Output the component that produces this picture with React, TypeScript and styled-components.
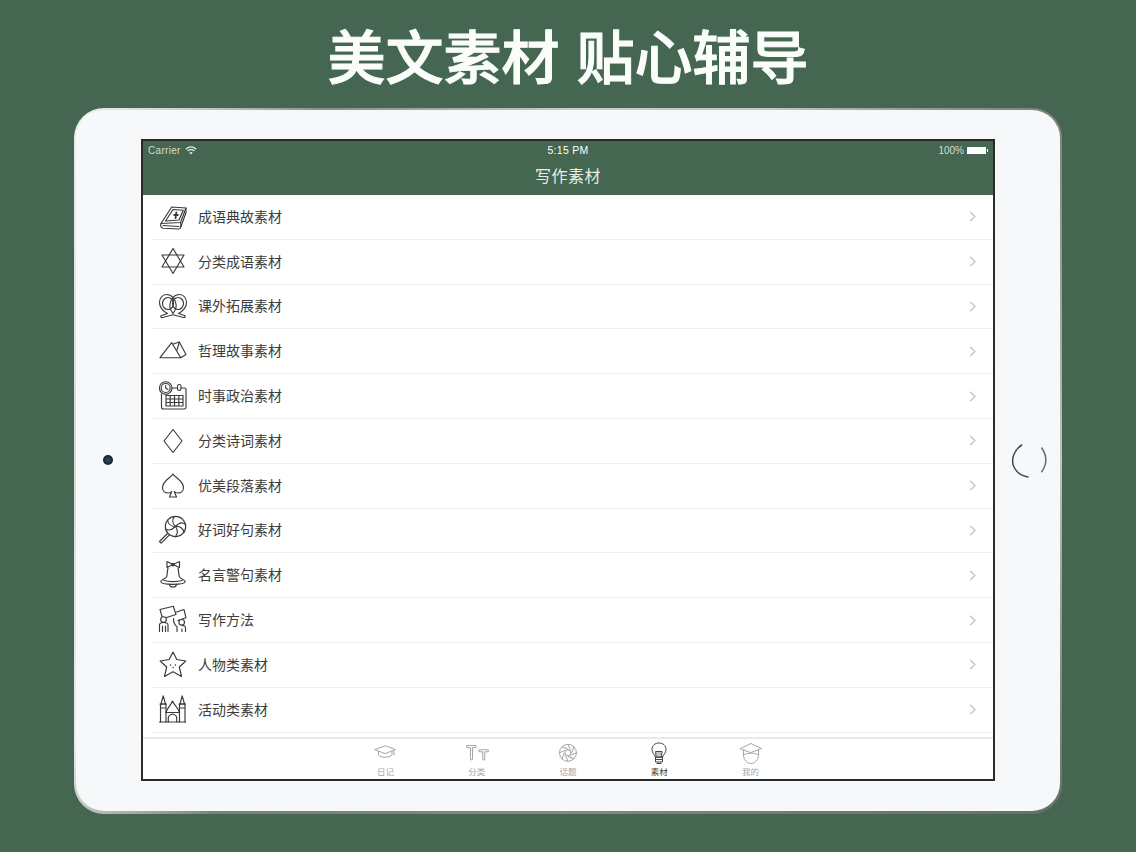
import * as React from 'react';
import styled, { createGlobalStyle } from 'styled-components';

const GlobalStyle = createGlobalStyle`
    html, body {
        margin: 0;
        padding: 0;
        background-color: #456650;
    }
`;

const Page = styled.div`
    width: 1136px;
    height: 852px;
    overflow: hidden;
    display: flex;
    flex-direction: column;
    align-items: center;
    background-color: #456650;
    font-family: 'Noto Sans CJK SC', 'Noto Sans', sans-serif;
`;

const Headline = styled.h1`
    height: 108px;
    margin: 0;
    padding-bottom: 1px;
    box-sizing: border-box;
    display: flex;
    align-items: center;
    font-size: 58px;
    font-weight: 500;
    -webkit-text-stroke: 1px #fbfdfb;
    word-spacing: 4px;
    color: #fbfdfb;
    white-space: pre;
`;

const DeviceEdge = styled.div`
    position: relative;
    width: 988px;
    height: 706px;
    box-sizing: border-box;
    padding: 2px 2px 3px 2px;
    border-radius: 30px;
    background: conic-gradient(
        #c8ccca 0deg,
        #c2c6c4 30deg,
        #7c827e 54deg,
        #bfc4c1 90deg,
        #6a706c 126deg,
        #858a87 180deg,
        #7a807c 225deg,
        #e8ecea 240deg,
        #d5d9d6 270deg,
        #eceeed 306deg,
        #8a908c 325deg,
        #c8ccca 360deg
    );
`;

const DeviceBody = styled.div`
    height: 100%;
    border-radius: 28px;
    background-color: #f7f8fa;
    display: flex;
    justify-content: center;
    padding-top: 29px;
    box-sizing: border-box;
`;

const Camera = styled.div`
    position: absolute;
    left: 29px;
    top: 347px;
    width: 10px;
    height: 10px;
    border-radius: 50%;
    background: radial-gradient(circle, #24506a 0%, #15222b 70%);
`;

const HomeButton = styled.svg`
    position: absolute;
    left: 937px;
    top: 334px;
`;

const Screen = styled.div`
    width: 854px;
    height: 642px;
    box-sizing: border-box;
    border: 2px solid #2a2a2a;
    display: flex;
    flex-direction: column;
    background-color: #ffffff;
`;

const Header = styled.header`
    height: 54px;
    flex-shrink: 0;
    background-color: #456650;
    color: #e6eee8;
`;

const StatusBar = styled.div`
    height: 18px;
    padding: 0 5px 0 5px;
    display: grid;
    grid-template-columns: 1fr auto 1fr;
    align-items: center;
    font-family: 'Liberation Sans', sans-serif;
    font-size: 10px;
`;

const StatusLeft = styled.div`
    display: flex;
    align-items: center;
    gap: 4px;
    color: #d4ded7;
    letter-spacing: 0.3px;
`;

const StatusTime = styled.div`
    font-size: 10.5px;
    color: #ffffff;
    letter-spacing: 0.3px;
`;

const StatusRight = styled.div`
    display: flex;
    align-items: center;
    justify-content: flex-end;
    gap: 3px;
    color: #d4ded7;
`;

const Battery = styled.div`
    position: relative;
    width: 19px;
    height: 7px;
    margin-right: 2px;
    background-color: #ffffff;

    &::after {
        content: '';
        position: absolute;
        right: -2px;
        top: 2px;
        width: 1px;
        height: 3px;
        background-color: #ffffff;
    }
`;

const NavTitle = styled.div`
    height: 36px;
    display: flex;
    align-items: center;
    justify-content: center;
    padding-bottom: 4px;
    box-sizing: border-box;
    font-size: 16px;
    letter-spacing: 0.5px;
`;

const List = styled.div`
    flex: 1;
    overflow: hidden;
`;

const Row = styled.div`
    height: 44.8px;
    box-sizing: border-box;
    margin-left: 9px;
    padding: 0 16px 2px 6px;
    display: flex;
    align-items: center;
    gap: 10px;
    border-bottom: 1px solid #efefef;
`;

const RowIcon = styled.svg`
    width: 30px;
    height: 30px;
    margin-top: 2px;
    flex-shrink: 0;
    fill: none;
    stroke: #3a3a3a;
    stroke-width: 1.15;
    stroke-linejoin: round;
    stroke-linecap: round;
`;

const RowLabel = styled.span`
    flex: 1;
    font-size: 14px;
    color: #3c3c3c;
`;

const Chevron = styled.svg`
    width: 7px;
    height: 11px;
    margin: 2px 1px 0 0;
    fill: none;
    stroke: #c4c4c8;
    stroke-width: 1.3;
`;

const TabBar = styled.nav`
    height: 42px;
    flex-shrink: 0;
    box-sizing: border-box;
    border-top: 2px solid #e9e9e9;
    display: flex;
    justify-content: center;
`;

const Tab = styled.div<{ $active?: boolean }>`
    width: 91.3px;
    display: flex;
    flex-direction: column;
    align-items: center;
    padding-top: 1px;
    color: ${(p) => (p.$active ? '#444444' : '#a6a6a6')};
`;

const TabIcon = styled.svg`
    width: 26px;
    height: 26px;
    fill: none;
    stroke: currentColor;
    stroke-width: 1;
    stroke-linejoin: round;
    stroke-linecap: round;
`;

const TabLabel = styled.span`
    font-size: 8.5px;
    line-height: 11px;
`;

const rowIcons: React.ReactNode[] = [
    <>
        <path d="M3 21.500 13.700 5 28 6 22.500 20.500Z" />
        <path d="M7.500 19 15 7.500 25.300 8.300 21 18Z" />
        <path d="M3 21.500C2 24 3 26 5.500 26.200L20.500 27C22 27 22.800 25.800 23 24.500L28 10.500V6" />
        <path d="M22.500 20.500 23 24.500M5 23.500 21 24.500" />
        <path d="M16.200 13h3.600M18.300 10.500 17.600 16" strokeWidth="1.800" />
    </>,
    <>
        <path d="M15 1.500 26 20H4Z" />
        <path d="M15 26.500 4 8H26Z" />
    </>,
    <>
        <path d="M15 6.500C13 4 10.500 3.500 8.500 3.500C4 3.500 1.500 7.500 1.500 11.500C1.500 16.500 5 20 9.500 22.500L3.500 24.500C2 25.500 3 26.800 4.500 26.500L15 23.800L25.500 26.500C27 26.800 28 25.500 26.500 24.500L20.500 22.500C25 20 28.500 16.500 28.500 11.500C28.500 7.500 26 3.500 21.500 3.500C19.500 3.500 17 4 15 6.500Z" />
        <ellipse cx="10" cy="12.500" rx="5.500" ry="6" />
        <ellipse cx="20" cy="12.500" rx="5.500" ry="6" />
        <path d="M15 6.500C17.500 9.500 18.500 13 18 16.500C17.500 19 16 21 15 22.500C14 21 12.500 19 12 16.500C11.500 13 12.500 9.500 15 6.500Z" />
    </>,
    <>
        <path d="M2 21.700 13.700 6.700 22.700 21.700Z" />
        <path d="M15.300 8 21.300 6 28 18.400 22.700 21.700" />
        <path d="M21.300 6 19 14" />
    </>,
    <>
        <path d="M3.500 13V26C3.500 27.200 4.500 28 5.500 28H26.500C27.500 28 28 27.200 28 26V8.500C28 7.500 27.500 7 26.500 7H23.500M18.500 7H14" />
        <circle cx="7.700" cy="7" r="6.300" fill="#ffffff" />
        <circle cx="7.700" cy="7" r="4.500" />
        <path d="M7.700 4.500V7.300L10 8.500" />
        <rect x="19.500" y="3.500" width="3.500" height="6" rx="1.700" />
        <path d="M8 14.500H25V25H8ZM8 18H25M8 21.500H25M12.200 14.500V25M16.500 14.500V25M20.800 14.500V25" />
    </>,
    <path d="M15 3.500 24 15 15 26.500 6 15Z" />,
    <path d="M15 3C13 6.500 4.500 10 4.500 16.500C4.500 20 7 22 10 22C11.500 22 13 21.500 13.700 20.500L11.500 26H18.500L16.300 20.500C17 21.500 18.500 22 20 22C23 22 25.500 20 25.500 16.500C25.500 10 17 6.500 15 3Z" />,
    <>
        <circle cx="17.500" cy="11.500" r="10.200" />
        <path d="M17.500 11.500C14 8 14 4 16.500 1.500M17.500 11.500C21 7.500 24.500 7 27.500 9.500M17.500 11.500C22.500 11 25.500 14 26 17.500M17.500 11.500C20 15 19.500 19 17.500 21.700M17.500 11.500C14 15 10.500 15.500 8 14.500M17.500 11.500C13 11.500 10 8.500 9.500 5" />
        <path d="M9.500 18.500 1.500 26.500 3.200 28.200 11.200 20.200" />
    </>,
    <>
        <path d="M15 4.500 9 1.500V7.600ZM15 4.500 21.500 1.500V7.600Z" />
        <circle cx="15" cy="4.500" r="1.300" />
        <path d="M10 8C9 12 9.500 15 8.500 17C7 19.500 3 19.500 2.800 21.500C2.800 23 5 24.300 15 24.300C25 24.300 27.200 23 27.200 21.500C27 19.500 23 19.500 21.500 17C20.500 15 21 12 20 8" />
        <path d="M6 20.500C10 22 20 22 24 20.500" />
        <path d="M11.500 24.300C12 28 18 28 18.500 24.300" />
    </>,
    <>
        <path d="M2 4.500 15.300 1.200 18 9.500 4.700 13.800Z" />
        <path d="M18.600 7 26 4.500 28 12.800 19.800 15.500" />
        <circle cx="5.500" cy="14.500" r="2.800" fill="#ffffff" />
        <circle cx="23.700" cy="17.300" r="2.800" fill="#ffffff" />
        <path d="M1.500 26.500V20C1.500 18 3.500 17.500 5.500 17.500C7.500 17.500 10 18 10 20V26.500M4.500 21V26.500M7.500 21V26.500" />
        <path d="M15.500 13.500C15.500 18 17 20.500 19 21.500V26.500M27.500 26.500V23C27.500 21.200 26 20.500 24 20.500M24 24V26.500" />
    </>,
    <>
        <path d="M15 2 18.800 9.500 27.800 11 21.300 17 23.500 26.500 15 21.800 6.500 26.500 8.700 17 2.200 11 11.200 9.500Z" />
        <path d="M12.500 15H12.700M17.300 15H17.500M15 17.500H15.200" strokeWidth="1.300" />
    </>,
    <>
        <path d="M1.500 27H27.500" />
        <path d="M2.500 27V9H8V27M21.500 27V9H27V27" />
        <path d="M2 9H8.500M21 9H27.500" />
        <path d="M3 9 5.200 .8 7.500 9M22 9 24.200 .8 26.500 9" />
        <path d="M8 17.500H21.500" />
        <path d="M8 17.500C9.500 12.500 12.500 11 14.500 6C16.500 11 20 12.500 21.500 17.500" />
        <path d="M10.300 27V23C10.300 20.800 12.500 19.500 14.500 19C16.500 19.500 18.700 20.800 18.700 23V27" />
        <path d="M3 13H7.500M22 13H26.500" />
    </>,
];

const rows = [
    '成语典故素材',
    '分类成语素材',
    '课外拓展素材',
    '哲理故事素材',
    '时事政治素材',
    '分类诗词素材',
    '优美段落素材',
    '好词好句素材',
    '名言警句素材',
    '写作方法',
    '人物类素材',
    '活动类素材',
];

const apertureBlades = [0, 45, 90, 135, 180, 225, 270, 315];

const tabs: { label: string; active?: boolean; icon: React.ReactNode }[] = [
    {
        label: '日记',
        icon: (
            <>
                <path d="M3 9.500 13.500 5.800 23.500 9.500 13.500 13.500Z" />
                <path d="M6.500 11.500V15C9 18 17 18 20 15V11.500" />
                <path d="M22 10.500V15" />
            </>
        ),
    },
    {
        label: '分类',
        icon: (
            <>
                <path d="M3 5.500H12V7.500H8.500V19.800H6.500V7.500H3Z" />
                <path d="M15.300 9.800H24.300V11.800H20.800V19.800H18.800V11.800H15.300Z" />
            </>
        ),
    },
    {
        label: '话题',
        icon: (
            <>
                <circle cx="13" cy="12.800" r="8.500" />
                <circle cx="13" cy="12.800" r="3" />
                {apertureBlades.map((deg) => (
                    <path key={deg} d="M13 4.300 15.500 10" transform={`rotate(${deg} 13 12.800)`} />
                ))}
            </>
        ),
    },
    {
        label: '素材',
        active: true,
        icon: (
            <>
                <path d="M9.500 17C8.500 14.500 6 13 6 9.500C6 5.500 9 3 13 3C17 3 20 5.500 20 9.500C20 13 17.500 14.500 16.500 17Z" />
                <path d="M10 11.500H16L15.500 17H10.500Z" fill="#c4c4c4" />
                <path d="M9.500 17V22H16.500V17M9.500 19.500H16.500" />
                <path d="M11 23.500H15" />
            </>
        ),
    },
    {
        label: '我的',
        icon: (
            <>
                <path d="M2.500 8.500 13 3.500 23.500 8.500 13 12.500Z" />
                <path d="M5.500 10V15C5.500 19.500 9 23.500 13 23.500C17 23.500 20.500 19.500 20.500 15V10" />
                <path d="M5.500 15C9 12.500 17 12.500 20.500 15" />
            </>
        ),
    },
];

function App() {
    return (
        <Page>
            <GlobalStyle />
            <Headline>美文素材 贴心辅导</Headline>
            <DeviceEdge>
                <DeviceBody>
                    <Screen>
                        <Header>
                            <StatusBar>
                                <StatusLeft>
                                    Carrier
                                    <svg width="12" height="9" viewBox="0 0 12 9" fill="none" stroke="#e6eee8" strokeWidth="1.300">
                                        <path d="M.8 3.200C4 .4 8 .4 11.200 3.200M2.600 5C4.800 3.300 7.200 3.300 9.400 5" />
                                        <path d="M4.300 6.500C5.500 5.700 6.500 5.700 7.700 6.500L6 8.400Z" fill="#e6eee8" stroke="none" />
                                    </svg>
                                </StatusLeft>
                                <StatusTime>5:15 PM</StatusTime>
                                <StatusRight>
                                    100%
                                    <Battery />
                                </StatusRight>
                            </StatusBar>
                            <NavTitle>写作素材</NavTitle>
                        </Header>
                        <List>
                            {rows.map((label, i) => (
                                <Row key={label}>
                                    <RowIcon viewBox="0 0 30 30">{rowIcons[i]}</RowIcon>
                                    <RowLabel>{label}</RowLabel>
                                    <Chevron viewBox="0 0 7 11">
                                        <path d="M1 .8 6 5.500 1 10.200" />
                                    </Chevron>
                                </Row>
                            ))}
                        </List>
                        <TabBar>
                            {tabs.map((tab) => (
                                <Tab key={tab.label} $active={tab.active}>
                                    <TabIcon viewBox="0 0 26 26">{tab.icon}</TabIcon>
                                    <TabLabel>{tab.label}</TabLabel>
                                </Tab>
                            ))}
                        </TabBar>
                    </Screen>
                </DeviceBody>
                <Camera />
                <HomeButton width="38" height="38" viewBox="0 0 38 38" fill="none" strokeWidth="1.500" strokeLinecap="round">
                    <path d="M10.700 3C3 8 0 17 2.500 24C5 30 10 34 17 35" stroke="#45484b" />
                    <path d="M30.700 6Q39 18 30.700 29.700" stroke="#6a6d70" />
                </HomeButton>
            </DeviceEdge>
        </Page>
    );
}

export default App;
